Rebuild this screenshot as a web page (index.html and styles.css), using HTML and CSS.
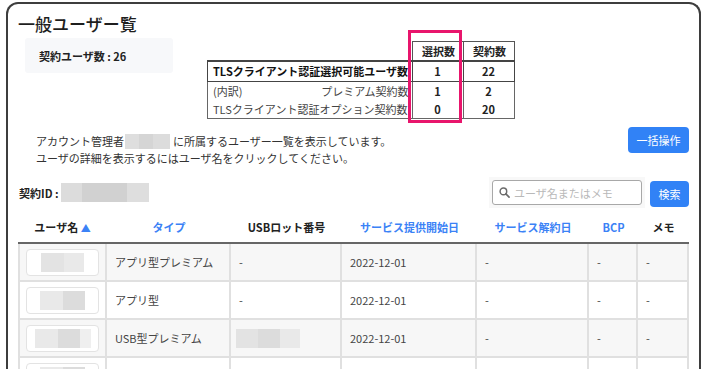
FILE: index.html
```html
<!DOCTYPE html>
<html lang="ja">
<head>
<meta charset="utf-8">
<title>一般ユーザー覧</title>
<link rel="stylesheet" href="styles.css">
</head>
<body>
<div class="frame">
  <h1 class="title">一般ユーザー覧</h1>

  <div class="summary-row">
    <div class="summary">契約ユーザ数 : 26</div>
    <div class="stats-wrap">
      <table class="stats">
        <tr class="head">
          <th class="blank"></th>
          <th class="hd">選択数</th>
          <th class="hd">契約数</th>
        </tr>
        <tr class="total">
          <th class="label">TLSクライアント認証選択可能ユーザ数</th>
          <td class="num">1</td>
          <td class="num">22</td>
        </tr>
        <tr class="sub">
          <td class="label"><div class="split"><span>(内訳)</span><span>プレミアム契約数</span></div></td>
          <td class="num">1</td>
          <td class="num">2</td>
        </tr>
        <tr class="sub last">
          <td class="label">TLSクライアント認証オプション契約数</td>
          <td class="num">0</td>
          <td class="num">20</td>
        </tr>
      </table>
      <div class="highlight"></div>
    </div>
  </div>

  <div class="intro-row">
    <p class="intro">アカウント管理者<span class="blur blur-name"><i class="b1"></i><i class="b2"></i><i class="b3"></i></span>に所属するユーザー一覧を表示しています。<br>ユーザの詳細を表示するにはユーザ名をクリックしてください。</p>
    <button class="btn btn-bulk" type="button">一括操作</button>
  </div>

  <div class="id-row">
    <div class="contract-id">
      <b>契約ID :</b>
      <span class="blur blur-id"><i class="c1"></i><i class="c2"></i><i class="c3"></i></span>
    </div>
    <form class="search">
      <div class="search-box">
        <svg class="search-icon" viewBox="0 0 12 12" width="11" height="11" aria-hidden="true">
          <circle cx="4.8" cy="4.8" r="3.6" fill="none" stroke="#6b6b6b" stroke-width="1.6"/>
          <line x1="7.5" y1="7.5" x2="11" y2="11" stroke="#6b6b6b" stroke-width="1.8" stroke-linecap="round"/>
        </svg>
        <input class="search-input" type="text" placeholder="ユーザ名またはメモ">
      </div>
      <button class="btn btn-search" type="button">検索</button>
    </form>
  </div>

  <table class="users">
    <colgroup>
      <col class="w1"><col class="w2"><col class="w3"><col class="w4"><col class="w5"><col class="w6"><col class="w7">
    </colgroup>
    <thead>
      <tr>
        <th>ユーザ名 <span class="sort">▲</span></th>
        <th class="link">タイプ</th>
        <th>USBロット番号</th>
        <th class="link">サービス提供開始日</th>
        <th class="link">サービス解約日</th>
        <th class="link">BCP</th>
        <th>メモ</th>
      </tr>
    </thead>
    <tbody>
      <tr>
        <td><div class="name-btn"><span class="nb g1 w23"></span><span class="nb g3 w20"></span></div></td>
        <td>アプリ型プレミアム</td>
        <td>-</td>
        <td>2022-12-01</td>
        <td>-</td>
        <td>-</td>
        <td>-</td>
      </tr>
      <tr>
        <td><div class="name-btn"><span class="nb g3 w23"></span><span class="nb g2 w22"></span></div></td>
        <td>アプリ型</td>
        <td>-</td>
        <td>2022-12-01</td>
        <td>-</td>
        <td>-</td>
        <td>-</td>
      </tr>
      <tr>
        <td><div class="name-btn"><span class="nb g3 w23"></span><span class="nb g2 w22"></span><span class="nb g4 w11"></span></div></td>
        <td>USB型プレミアム</td>
        <td><span class="usb-blur"><span class="nb g1 w22"></span><span class="nb g2 w22"></span><span class="nb g3 w20"></span></span></td>
        <td>2022-12-01</td>
        <td>-</td>
        <td>-</td>
        <td>-</td>
      </tr>
      <tr class="partial">
        <td><div class="name-btn"><span class="nb g3 w23"></span><span class="nb g2 w22"></span></div></td>
        <td></td>
        <td></td>
        <td></td>
        <td></td>
        <td></td>
        <td></td>
      </tr>
    </tbody>
  </table>
</div>
</body>
</html>
```

FILE: styles.css
```css
html, body {
  margin: 0;
  padding: 0;
  overflow: hidden;
  background: #fff;
}

body {
  font-family: "Noto Sans CJK JP", "Noto Sans", sans-serif;
  font-size: 11px;
  color: #333;
}

.frame {
  box-sizing: border-box;
  width: 695px;
  min-height: 420px;
  margin: 2px 0 0 6px;
  padding: 8px 10px 0;
  border: 2px solid #3d3d3d;
  border-bottom: none;
  border-radius: 12px 12px 0 0;
}

.title {
  margin: 0 0 2px;
  font-size: 17px;
  line-height: 24px;
  font-weight: 500;
  color: #1e1e1e;
}

/* summary + stats */
.summary-row {
  display: flex;
  align-items: flex-start;
}

.summary {
  box-sizing: border-box;
  width: 148px;
  height: 35px;
  margin-left: 7px;
  padding-left: 14px;
  background: #f7f8fa;
  border-radius: 3px;
  font-weight: 700;
  color: #222;
  display: flex;
  align-items: center;
}

.stats-wrap {
  position: relative;
  margin-left: 34px;
  margin-top: 3px;
}

.stats {
  border-collapse: collapse;
  table-layout: fixed;
  width: 296px;
  font-size: 11px;
  line-height: 17px;
}

.stats th, .stats td {
  padding: 0 3px 0 5px;
  white-space: nowrap;
}

.stats .head th { height: 18px; }
.stats .total th, .stats .total td { height: 19px; }
.stats .sub td { height: 18px; }

.stats .blank {
  width: 196px;
  border: none;
}

.stats .hd {
  width: 42px;
  text-align: center;
  font-weight: 700;
  color: #222;
  border: 1px solid #555;
}

.stats .total th,
.stats .total td {
  border: 1px solid #444;
  border-top-width: 2px;
}

.stats .total .label {
  text-align: left;
  font-weight: 700;
  color: #111;
}

.stats .sub td {
  border-left: 1px solid #666;
  border-right: 1px solid #666;
}

.stats .sub.last td {
  border-bottom: 1px solid #666;
}

.stats .sub .label {
  color: #444;
}

.stats .num {
  text-align: center;
  font-weight: 700;
  color: #222;
  padding: 0;
}

.split {
  display: flex;
  justify-content: space-between;
}

.highlight {
  position: absolute;
  left: 201px;
  top: -11px;
  width: 54px;
  height: 93px;
  box-sizing: border-box;
  border: 3px solid #e8156c;
}

/* intro */
.intro-row {
  display: flex;
  justify-content: space-between;
  align-items: flex-start;
  margin-top: 8px;
}

.intro {
  margin: 0;
  padding: 6px 0 0 18px;
  line-height: 17px;
  color: #333;
}

.blur {
  display: inline-flex;
  vertical-align: -3px;
  height: 15px;
  margin: 0 3px 0 1px;
}

.blur i {
  display: block;
  height: 100%;
}

.blur-name .b1 { width: 14px; background: #dedede; }
.blur-name .b2 { width: 14px; background: #d5d5d5; }
.blur-name .b3 { width: 17px; background: #dcdcdc; }

.btn {
  border: none;
  border-radius: 4px;
  background: #3182f6;
  color: #fff;
  font-family: inherit;
  font-size: 11px;
  height: 26px;
  padding: 0;
  cursor: pointer;
}

.btn-bulk { width: 61px; }

/* id + search */
.id-row {
  display: flex;
  justify-content: space-between;
  align-items: center;
  margin-top: 12px;
  height: 27px;
}

.contract-id {
  display: flex;
  align-items: center;
  margin-left: 1px;
  color: #222;
}

.blur-id {
  height: 19px;
  margin-left: 2px;
}

.blur-id .c1 { width: 21px; background: #dcdcdc; }
.blur-id .c2 { width: 45px; background: #d1d1d1; }
.blur-id .c3 { width: 22px; background: #dedede; }

.search {
  display: flex;
  align-items: center;
}

.search-box {
  position: relative;
  padding: 3px;
  background: #f8f8f8;
}

.search-icon {
  position: absolute;
  left: 10px;
  top: 10px;
}

.search-input {
  box-sizing: border-box;
  width: 150px;
  height: 25px;
  padding: 0 0 0 21px;
  border: 1px solid #a8a8a8;
  border-radius: 3px;
  font-family: inherit;
  font-size: 11px;
  color: #333;
  background: #fff;
  outline: none;
}

.search-input::placeholder { color: #b9b9b9; }

.btn-search {
  width: 39px;
  margin-left: 5px;
  margin-top: 2px;
}

/* users table */
.users {
  margin-top: 6px;
  width: 671px;
  table-layout: fixed;
  border-collapse: separate;
  border-spacing: 0;
}

.users .w1 { width: 89px; }
.users .w2 { width: 124px; }
.users .w3 { width: 111px; }
.users .w4 { width: 135px; }
.users .w5 { width: 112px; }
.users .w6 { width: 49px; }
.users .w7 { width: 51px; }

.users th {
  height: 30px;
  padding: 0;
  text-align: center;
  font-weight: 700;
  color: #222;
  border-bottom: 2px solid #666;
  white-space: nowrap;
}

.users th.link { color: #3b82f6; }

.sort {
  color: #3b82f6;
  font-size: 10px;
}

.users td {
  box-sizing: border-box;
  height: 38px;
  padding: 0 8px;
  color: #444;
  border-right: 2px solid #e0e0e0;
  border-bottom: 2px solid #e0e0e0;
  white-space: nowrap;
}

.users td:first-child { border-left: 2px solid #e0e0e0; }

.users tbody tr:nth-child(odd) td { background: #f7f7f7; }

.users td:first-child { padding: 0 6px; }

.name-btn {
  box-sizing: border-box;
  height: 27px;
  border: 1px solid #e3e3e3;
  border-radius: 4px;
  background: #fff;
  display: flex;
  justify-content: center;
  align-items: center;
}

.nb {
  display: block;
  height: 19px;
}

.g1 { background: #e3e3e3; }
.g2 { background: #dcdcdc; }
.g3 { background: #e9e9e9; }
.g4 { background: #efefef; }
.w11 { width: 11px; }
.w20 { width: 20px; }
.w22 { width: 22px; }
.w23 { width: 23px; }

.usb-blur {
  display: flex;
  margin-left: -3px;
}
```
